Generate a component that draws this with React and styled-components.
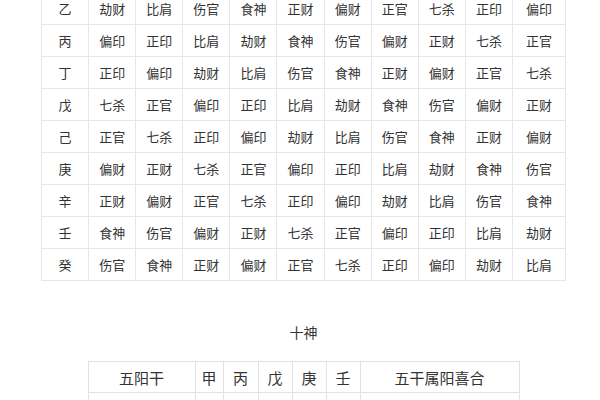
import React from 'react';
import styled, { createGlobalStyle } from 'styled-components';

const GlobalStyle = createGlobalStyle`
  html, body {
    margin: 0;
    padding: 0;
    background: #ffffff;
    overflow: hidden;
  }
  body {
    font-family: "Noto Sans CJK SC", "Noto Sans", sans-serif;
    color: #333333;
  }
`;

const Page = styled.div`
  width: 600px;
  height: 400px;
  overflow: hidden;
  display: flex;
  flex-direction: column;
  align-items: center;
  padding-left: 7px;
  box-sizing: border-box;
`;

const GodsGrid = styled.div`
  margin-top: -8px;
  width: 525px;
  box-sizing: border-box;
  display: grid;
  grid-template-columns: repeat(10, 1fr) 52px;
  grid-auto-rows: 31px;
  gap: 1px;
  padding: 1px;
  background: #e6e6e6;
`;

const Cell = styled.div`
  background: #ffffff;
  display: flex;
  align-items: center;
  justify-content: center;
  font-size: ${({ $size }) => $size || 13}px;
  color: #333333;
  line-height: 1;
`;

const Title = styled.div`
  margin-top: 41px;
  font-size: 14px;
  line-height: 20px;
  color: #333333;
`;

const HeGrid = styled.div`
  margin-top: 19px;
  width: 432px;
  box-sizing: border-box;
  display: grid;
  grid-template-columns: 106px 27px 34px 33px 33px 33px 1fr;
  grid-auto-rows: 30px;
  gap: 1px;
  padding: 1px;
  background: #e2e2e2;
`;

const rows = [
  ['乙', '劫财', '比肩', '伤官', '食神', '正财', '偏财', '正官', '七杀', '正印', '偏印'],
  ['丙', '偏印', '正印', '比肩', '劫财', '食神', '伤官', '偏财', '正财', '七杀', '正官'],
  ['丁', '正印', '偏印', '劫财', '比肩', '伤官', '食神', '正财', '偏财', '正官', '七杀'],
  ['戊', '七杀', '正官', '偏印', '正印', '比肩', '劫财', '食神', '伤官', '偏财', '正财'],
  ['己', '正官', '七杀', '正印', '偏印', '劫财', '比肩', '伤官', '食神', '正财', '偏财'],
  ['庚', '偏财', '正财', '七杀', '正官', '偏印', '正印', '比肩', '劫财', '食神', '伤官'],
  ['辛', '正财', '偏财', '正官', '七杀', '正印', '偏印', '劫财', '比肩', '伤官', '食神'],
  ['壬', '食神', '伤官', '偏财', '正财', '七杀', '正官', '偏印', '正印', '比肩', '劫财'],
  ['癸', '伤官', '食神', '正财', '偏财', '正官', '七杀', '正印', '偏印', '劫财', '比肩'],
];

const heHeader = ['五阳干', '甲', '丙', '戊', '庚', '壬', '五干属阳喜合'];

export default function App() {
  return (
    <>
      <GlobalStyle />
      <Page>
        <GodsGrid>
          {rows.map((row, i) =>
            row.map((text, j) => <Cell key={`${i}-${j}`}>{text}</Cell>)
          )}
        </GodsGrid>
        <Title>十神</Title>
        <HeGrid>
          {heHeader.map((text, j) => (
            <Cell key={`h-${j}`} $size={15}>{text}</Cell>
          ))}
          {heHeader.map((_, j) => (
            <Cell key={`r-${j}`} $size={15} />
          ))}
        </HeGrid>
      </Page>
    </>
  );
}
